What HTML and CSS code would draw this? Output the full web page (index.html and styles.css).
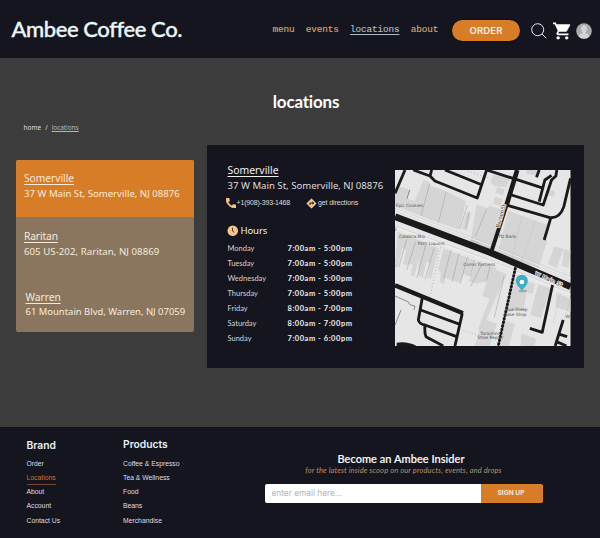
FILE: index.html
```html
<!DOCTYPE html>
<html lang="en">
<head>
<meta charset="utf-8">
<title>Ambee Coffee Co. – locations</title>
<link rel="stylesheet" href="styles.css">
</head>
<body>
<header class="header">
  <div class="logo">Ambee Coffee Co.</div>
  <nav class="nav">
    <a>menu</a><a>events</a><a class="active">locations</a><a class="low">about</a>
  </nav>
  <button class="order">ORDER</button>
  <svg class="search" viewBox="0 0 16 16"><circle cx="6.7" cy="6.7" r="6" /><path d="M11 11l4.4 4.4"/></svg>
  <svg class="cart" viewBox="1 2 21 20"><path d="M7 18c-1.100 0-1.990.9-1.990 2S5.900 22 7 22s2-.9 2-2-.9-2-2-2zM1 2v2h2l3.600 7.590-1.350 2.450c-.16.28-.25.61-.25.96 0 1.100.9 2 2 2h12v-2H7.420c-.14 0-.25-.11-.25-.25l.03-.12.9-1.630h7.450c.75 0 1.410-.41 1.750-1.030l3.580-6.490A1 1 0 0 0 20 4H5.210l-.94-2H1zm16 16c-1.100 0-1.990.9-1.990 2s.89 2 1.990 2 2-.9 2-2-.9-2-2-2z"/></svg>
  <svg class="avatar" viewBox="0 0 16 16"><clipPath id="disc"><circle cx="8" cy="8" r="7.800"/></clipPath><circle cx="8" cy="8" r="7.800" fill="#a9abac"/><g clip-path="url(#disc)" fill="#d3d4d5"><ellipse cx="8" cy="5.800" rx="2.900" ry="3.600"/><path d="M6.500 8h3v2.200l2.700 1.100q1 .6 1 2.200V16H2.800v-2.500q0-1.600 1-2.200l2.700-1.100z"/></g></svg>
</header>

<main class="main">
  <h1 class="title">locations</h1>
  <div class="crumbs"><a>home</a><span>/</span><a class="current">locations</a></div>
  <div class="content">
    <aside class="stores">
      <div class="store selected"><h2>Somerville</h2><p>37 W Main St, Somerville, NJ 08876</p></div>
      <div class="store raritan"><h2>Raritan</h2><p>605 US-202, Raritan, NJ 08869</p></div>
      <div class="store warren"><h2>Warren</h2><p>61 Mountain Blvd, Warren, NJ 07059</p></div>
    </aside>
    <section class="detail">
      <div class="info">
        <h2 class="name">Somerville</h2>
        <p class="address">37 W Main St, Somerville, NJ 08876</p>
        <div class="contact">
          <svg class="phone" viewBox="3 3 18 18"><path d="M6.620 10.790c1.440 2.830 3.760 5.140 6.590 6.590l2.200-2.200c.27-.27.67-.36 1.020-.24 1.120.37 2.330.57 3.570.57.55 0 1 .45 1 1V20c0 .55-.45 1-1 1-9.390 0-17-7.610-17-17 0-.55.45-1 1-1h3.500c.55 0 1 .45 1 1 0 1.250.2 2.450.57 3.570.11.35.03.74-.25 1.020z"/></svg>
          <span class="number">+1(908)-393-1468</span>
          <svg class="route" viewBox="1 1 22 22"><path d="M21.710 11.290l-9-9a1 1 0 0 0-1.410 0l-9 9a1 1 0 0 0 0 1.410l9 9c.39.39 1.020.39 1.410 0l9-9a1 1 0 0 0 0-1.410zM14 14.500V12h-4v3H8v-4c0-.55.45-1 1-1h5V7.500l3.500 3.500-3.500 3.500z"/></svg>
          <span class="directions">get directions</span>
        </div>
        <h3 class="hours-title"><svg viewBox="0 0 12 12"><circle cx="6" cy="6" r="5.500" fill="#f8c48c"/><path d="M5.700 2.800v3.400l2 1.500" fill="none" stroke="#3a2c25" stroke-width="1"/></svg>Hours</h3>
        <dl class="hours">
          <dt>Monday</dt><dd>7:00am - 5:00pm</dd>
          <dt>Tuesday</dt><dd>7:00am - 5:00pm</dd>
          <dt>Wednesday</dt><dd>7:00am - 5:00pm</dd>
          <dt>Thursday</dt><dd>7:00am - 5:00pm</dd>
          <dt>Friday</dt><dd>8:00am - 7:00pm</dd>
          <dt>Saturday</dt><dd>8:00am - 7:00pm</dd>
          <dt>Sunday</dt><dd>7:00am - 6:00pm</dd>
        </dl>
      </div>
      <svg class="map" viewBox="0 0 527 528" preserveAspectRatio="none">
        <rect width="527" height="528" fill="#e6e6e6"/>
        <g fill="#d5d5d5">
          <path d="M15 50l30 10-8 26 22 6 28-62 18 8 0 8 48 18 60 30 -20 85-82-28-96-38-15-6V75z"/>
          <path d="M215 125l14 5-14 52-14-5zM245 103l32 12 8-8 28 10 18-8-40 130-64-26z"/>
          <path d="M295 14l52 8-12 30-40-4-8-14zM307 50l22 8-5 18-22-7zM299 80l24 8-6 20-22-8z"/>
          <path d="M340 122l118 42-7 40 6 6-25 85-125-44zM478 228l28 10-20 55-26-10zM508 238l19 5-6 50-20-5zM395 0h35v20l-35-10zM460 63l14-3 8 8-6 12-16-4z"/>
          <path d="M8 185l75 30-25 105-12-4 8-30-12-6-6 6-12-4 10-42-12-6-14 60-8-4zM72 215l60 20-24 92-12-4 10-44-12-4-10 48-14-6z"/>
          <path d="M145 235l95 36-16 48-18-6-12 26-16-6-26-9-4 18-14-4 4-30-8-8zM245 272l60 22-18 48-20-7-25 6-20-8z"/>
          <path d="M290 295l45 18-60 135-14 34-12-4 35-92-22-8zM365 315l20 8 18 14 18 4-8 30-18-4-8 50-54 10zM430 343l38 12-30 90-32-10zM485 368l42 18v40l-45-16z"/>
          <path d="M262 445l44 16-22 66h-44l12-40zM325 450l35 12-18 66h-28zM380 490l45 18-8 20h-40z"/>
        </g>
        <g fill="none" stroke="#f2f2f2" stroke-width="3"><path d="M0 119l285 108L527 325M0 172l290 104 237 98"/></g>
        <g fill="none" stroke="#b8b8b8" stroke-width="1"><path d="M0 115l285 108L527 320M0 122l285 107L527 328M0 168l290 104 237 98M420 155l-42 125M380 140l-28 125M497 370l-22 90M527 385l-25 85"/></g>
        <g fill="none" stroke="#999" stroke-width="1.500"><path d="M104 42L78 138M153 68l-23 90M217 105l-22 72M275 118l-34 82M223 125l-10 50M35 208L12 290M62 215L35 300M92 225L66 325M118 232L90 328M168 240l-22 85M192 250l-20 85M218 260l-22 80M240 270l-14 48M262 280l-34 68M285 290l-10 40M328 318l-30 125M225 210l28 10"/></g>
        <g fill="none" stroke="#777" stroke-width="2.500"><path d="M44 60l-8 26M18 420L0 465M0 378l40 18 5 8 15 4-3 12"/><path d="M137 232L105 380M218 3l60 20M202 480l60 20" stroke="#999" stroke-width="2" stroke-dasharray="3 7"/></g>
        <g fill="none" stroke="#1a1a1a" stroke-width="8.500" stroke-linejoin="round">
          <path d="M30 0L0 70M55 0l50 18 15 15 127 51L275 0M150 0l112 45M110 0l-5 20"/>
          <path d="M275 0l172 55M350 75l95 30 25-75 13-12 3-18M433 95l17-65 20-14M433 0l-8 22M335 105l130 38q30 3 42-33l20-85M468 143l-20 67"/>
          <path d="M202 430l-22 98M82 383L70 450q3 12 20 15l95 35M77 420l118 43M90 465q-2 25 3 35l52 28"/>
          <path d="M473 345l-31 142-37-12M505 450l-24 78M495 493l22 7M485 515l30 13"/>
          <path d="M367 0l-32 105" stroke-width="14"/><path d="M335 105l-45 138" stroke-width="12"/>
          <path d="M0 346l204 84" stroke-width="13"/>
          <path d="M0 140l285 107L527 350" stroke-width="20"/>
          <path d="M362 292l-52 236" stroke-dasharray="8 3"/>
          <path d="M362 292l-52 236" stroke-width="4"/>
        </g>
        <path d="M5 528v-10q32-5 60 10z" fill="#1a1a1a"/>
        <g class="road-labels"><text transform="translate(419 316) rotate(23)" textLength="88">W Main St</text><text transform="translate(313 174) rotate(-74)" textLength="72">Division St</text></g>
        <g class="labels">
          <text x="2" y="110" textLength="82">Epic Cookies</text><text x="12" y="203" textLength="78">Calabria Mia</text><text x="68" y="226" textLength="81">Path Liquors</text>
          <text x="310" y="204" textLength="54">TD Bank</text><text x="205" y="289" textLength="96">Comic Fortress</text>
          <text x="330" y="423" textLength="68">Blue Sheep</text><text x="327" y="438" textLength="68">Bake Shop</text>
          <text x="256" y="494" textLength="60">Tarantino</text><text x="248" y="508" textLength="77">Shoe Repair</text><text x="512" y="444">W</text><text x="-4" y="181">g</text>
        </g>
        <ellipse cx="384" cy="363" rx="13" ry="4" fill="#aaa"/>
        <path d="M381 364c-4-11-18-18-18-32a18 18 0 0 1 36 0c0 14-14 21-18 32z" fill="#40acc8"/><circle cx="381" cy="336" r="7" fill="#fff"/>
      </svg>
    </section>
  </div>
</main>

<footer class="footer">
  <div class="links brand"><h4>Brand</h4><a>Order</a><a class="here">Locations</a><a>About</a><a>Account</a><a>Contact Us</a></div>
  <div class="links products"><h4>Products</h4><a>Coffee &amp; Espresso</a><a>Tea &amp; Wellness</a><a>Food</a><a>Beans</a><a>Merchandise</a></div>
  <div class="insider">
    <h3>Become an Ambee Insider</h3>
    <p>for the latest inside scoop on our products, events, and drops</p>
    <form class="signup"><input type="text" placeholder="enter email here..."><button type="button">SIGN UP</button></form>
  </div>
</footer>
</body>
</html>
```
FILE: styles.css
```css
* { box-sizing: border-box; margin: 0; padding: 0; }
body {
  width: 600px; height: 538px; overflow: hidden;
  display: flex; flex-direction: column;
  background: #3c3c3c; color: #eee;
  font-family: "Noto Sans", sans-serif; white-space: nowrap;
}
h1, h2, h3, h4 { font-weight: 400; }
button, input { border: 0; font-family: Inter, sans-serif; }
svg { display: block; flex: none; }

.header { height: 58px; flex: none; display: flex; align-items: center; background: #15151f; }
.logo { width: 261px; padding-left: 11.5px; font: 500 22px/28px Lato, sans-serif; letter-spacing: -.42px; color: #eaf6f8; -webkit-text-stroke: .35px #eaf6f8; }
.nav { width: 191px; padding: 1px 0 0 11.5px; display: flex; gap: 11.3px; font: 9.300px/12px "Liberation Mono", monospace; letter-spacing: -.09px; color: #d9a56c; -webkit-text-stroke: .15px; }
.nav .active { color: #a9bcc6; text-decoration: underline; text-underline-offset: 1.500px; }
.order { width: 68px; height: 21px; margin-top: 3px; border-radius: 11px; background: #d77c27; color: #fff3e3; font-weight: 600; font-size: 9.500px; letter-spacing: .15px; box-shadow: 0 0 2px #0a0a10; }
.search { width: 16px; height: 16px; margin: 3px 0 0 10.500px; fill: none; stroke: #e8e8ee; stroke-width: 1; }
.cart { width: 18px; height: 18px; margin: 4px 0 0 6px; fill: #fff; }
.avatar { width: 16px; height: 16px; margin: 3px 0 0 5.500px; }

.main { height: 369px; flex: none; }
.title { margin-top: 32px; padding-left: 12px; text-align: center; font: 700 17px/24px Lato, sans-serif; letter-spacing: -.2px; color: #fff; }
.crumbs { display: flex; margin: 9px 0 0 23.500px; font-size: 6.500px; line-height: 10px; color: #ddd; }
.crumbs span { margin: 0 4px 0 4px; }
.crumbs .current { color: #b3b8b8; letter-spacing: -.05px; text-decoration: underline; }
.content { display: flex; align-items: flex-start; margin-top: 12px; }

.stores { width: 178px; height: 172px; margin: 15px 13px 0 16px; border-radius: 2px; overflow: hidden; background: #8a765e; color: #f7eadb; }
.store { height: 57px; padding: 11px 0 0 8px; font-size: 9.600px; line-height: 15px; }
.store h2 { font-size: 10.200px; line-height: 15px; text-decoration: underline; text-decoration-thickness: .5px; text-underline-offset: 1.500px; }
.selected { background: #d77c27; }
.raritan { padding-top: 12px; letter-spacing: .07px; }
.raritan h2 { letter-spacing: -.1px; }
.warren { padding: 16px 0 0 9.500px; font-size: 9.450px; }
.warren p { margin-top: -1px; }

.detail { width: 377px; height: 223px; display: flex; background: #15151f; }
.info { width: 188px; padding: 18px 0 0 20.500px; }
.name { font-size: 10.400px; line-height: 15px; text-decoration: underline; text-decoration-thickness: .7px; text-underline-offset: 1.500px; }
.address { font-size: 9.600px; line-height: 16px; color: #ddd; }
.contact { display: flex; align-items: center; height: 12px; margin: 3px 0 0 -.500px; font: 7px/12px "Liberation Sans", sans-serif; color: #ddd; }
.contact svg { fill: #f8c48c; }
.phone { width: 10px; height: 10px; margin-left: -1px; stroke: #f8c48c; stroke-width: 1.500; }
.number { width: 69px; letter-spacing: -.17px; margin-left: .5px; }
.route { width: 11px; height: 11px; }
.directions { margin-left: 1.500px; letter-spacing: -.11px; }
.hours-title { display: flex; align-items: center; gap: 2px; height: 14px; margin: 14.500px 0 0 -.500px; font-size: 9.600px; letter-spacing: -.15px; }
.hours-title svg { width: 11.500px; height: 11.500px; }
.hours { display: grid; grid-template-columns: 60px auto; grid-auto-rows: 15.050px; margin-top: 3px; font: 7.500px/15px Lato, sans-serif; color: #d3d3d6; }
.hours dd { font-weight: 700; letter-spacing: .53px; color: #eee; }
.map { width: 175.500px; height: 176px; margin-top: 25px; }
.labels { font: 13px "DejaVu Sans", sans-serif; fill: #555; }
.road-labels { font: 16px "DejaVu Sans", sans-serif; fill: #333; stroke: #eee; stroke-width: 4px; paint-order: stroke; }

.footer { height: 110.500px; flex: none; display: flex; background: #15151f; box-shadow: 0 1px #85858a; }
.links { display: flex; flex-direction: column; align-items: flex-start; color: #dedee2; font: 6.800px/14.150px "Liberation Sans", sans-serif; }
.links h4 { height: 19px; font: 600 10.300px/15px Inter, sans-serif; color: #e6f1f4; }
.brand { width: 123px; padding: 11px 0 0 26.500px; }
.products { width: 141.500px; padding-top: 10px; }
.products h4 { height: 20px; }
.links .here { color: #c4762f; line-height: 11px; height: 13px; margin: .900px 0 .250px; border-bottom: 1px solid #74492b; }
.insider { width: 278px; padding-top: 25px; text-align: center; }
.insider h3 { font: 500 11px/14px Lato, sans-serif; letter-spacing: .05px; padding-right: 5px; color: #fff; -webkit-text-stroke: .15px #fff; }
.insider p { font: italic 7.500px/9px Lato, sans-serif; letter-spacing: .14px; color: #b4906c; }
.signup { display: flex; height: 19px; margin-top: 8.500px; border-radius: 2px; overflow: hidden; }
.signup input { width: 216px; padding-left: 7px; background: #fff; font-size: 8.300px; }
.signup input::placeholder { color: #b5b5b5; opacity: 1; }
.signup button { flex: 1; background: #d77c27; color: #fff3e3; font-size: 6.600px; font-weight: 600; padding-right: 1px; }
```
